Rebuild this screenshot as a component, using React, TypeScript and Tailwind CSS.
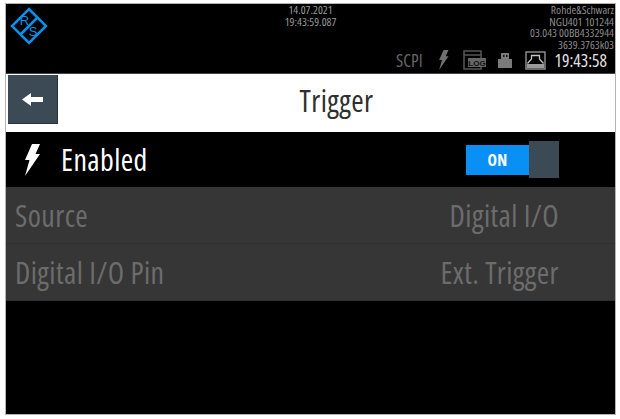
const condensed = "font-['Open_Sans',sans-serif] [font-stretch:75%]";

function Logo() {
  return (
    <svg width="38" height="38" viewBox="0 0 38 38" className="block">
      <path d="M19 2 L36 19 L19 36 L2 19 Z M28 10 L10 28" fill="none" stroke="#0c8fe8" strokeWidth="2.500" />
      <text x="14.500" y="18" fill="#0c8fe8" fontSize="13" textAnchor="middle" fontFamily="Liberation Sans">R</text>
      <text x="23" y="28.500" fill="#0c8fe8" fontSize="13" textAnchor="middle" fontFamily="Liberation Sans">S</text>
    </svg>
  );
}

function Bolt({ className, fill }: { className: string; fill: string }) {
  return (
    <svg viewBox="0 0 16 32" className={className}>
      <path d="M8 0 L16 0 L11.500 10 L16 10 L1 32 L5.500 16 L1 16 Z" fill={fill} />
    </svg>
  );
}

function LogIcon() {
  return (
    <svg width="23" height="20" viewBox="0 0 23 20" className="block">
      <path d="M1 1 H18 V19 H1 Z M1 5 H18" fill="none" stroke="#555" strokeWidth="1.500" />
      <rect x="5" y="8" width="18" height="9" fill="#666" />
      <text x="14" y="15.500" fontSize="8" fontWeight="700" fill="#111" textAnchor="middle" fontFamily="Liberation Sans">LOG</text>
    </svg>
  );
}

function UsbIcon() {
  return (
    <svg width="14" height="15" viewBox="0 0 14 15" className="block">
      <path d="M3 0 H11 V6 H14 V15 H0 V6 H3 Z" fill="#7a7a7a" />
      <rect x="5" y="2" width="1.500" height="2" fill="#111" />
      <rect x="8" y="2" width="1.500" height="2" fill="#111" />
    </svg>
  );
}

function LanIcon() {
  return (
    <svg width="21" height="19" viewBox="0 0 21 19" className="block">
      <path d="M1 1 H20 V18 H1 Z" fill="none" stroke="#8a8a8a" strokeWidth="1.500" />
      <path d="M2 12 L6.500 7 V4 H14.500 V7 L19 12 V14 H2 Z" fill="#000" />
      <path d="M2.500 12.500 L6.500 8 V4.500 H14.500 V8 L18.500 12.500" fill="none" stroke="#c4c4c4" strokeWidth="1.300" />
      <rect x="2" y="13" width="17" height="4" fill="#9a9a9a" />
    </svg>
  );
}

function Row({ label, value }: { label: string; value: string }) {
  return (
    <div className="flex h-[57px] items-center justify-between border-b border-[#283038] bg-[#363636] pl-[9px] pr-[56px] text-[30px] tracking-[0.4px] text-[#6c6c6c]">
      <span>{label}</span>
      <span>{value}</span>
    </div>
  );
}

export default function App() {
  return (
    <div className={`h-[419px] w-[620px] bg-white pb-[4px] pl-[5px] pr-[4px] pt-[3px] ${condensed}`}>
      <div className="flex h-full flex-col border border-[#b4b4b4] bg-black">
        <header className="grid h-[70px] shrink-0 grid-cols-[1fr_auto_1fr] border-b border-[#3b4650] bg-black">
          <div className="pl-[4px] pt-[3px]"><Logo /></div>
          <div className="text-center text-[11.500px] leading-[12px] text-[#9a9a9a]">
            <div>14.07.2021</div>
            <div>19:43:59.087</div>
          </div>
          <div className="flex flex-col items-end pr-[1px]">
            <div className="h-[46px] whitespace-nowrap text-right text-[11.500px] leading-[11.500px] text-[#8c8c8c]">
              <div>Rohde&amp;Schwarz</div>
              <div>NGU401 101244</div>
              <div>03.043 00BB4332944</div>
              <div>3639.3763k03</div>
            </div>
            <div className="flex h-[20px] items-center pr-[7px]">
              <span className="mr-[15px] text-[17.500px] leading-[20px] text-[#666]">SCPI</span>
              <Bolt className="mr-[14px] h-[20px] w-[11px]" fill="#6f6f6f" />
              <div className="mr-[12px]"><LogIcon /></div>
              <div className="mr-[13px]"><UsbIcon /></div>
              <div className="mr-[9px]"><LanIcon /></div>
              <span className="text-[17.500px] leading-[20px] text-[#e0e0e0]">19:43:58</span>
            </div>
          </div>
        </header>
        <div className="flex h-[58px] shrink-0 bg-white text-[#2f2f2f]">
          <button className="ml-[2px] mt-[1px] flex h-[49px] w-[50px] items-center justify-center border-b border-r border-[#2a3238] bg-[#3c4a55]">
            <svg width="21" height="13" viewBox="0 0 21 13"><path d="M0 6.500 L9 0 V4 H21 V9 H9 V13 Z" fill="#fff" /></svg>
          </button>
          <span className="flex-1 pt-[7px] text-center text-[30px] leading-[40px] tracking-[0.4px]">Trigger</span>
        </div>
        <div className="flex h-[55px] shrink-0 items-center justify-between bg-black pl-[18px] pr-[56px] text-[30px] tracking-[0.4px] text-white">
          <div className="flex items-center">
            <Bolt className="mr-[21px] h-[32px] w-[16px]" fill="#fff" />
            <span>Enabled</span>
          </div>
          <div className="flex items-center">
            <div className="flex h-[30px] w-[63px] items-center justify-center bg-[#0a8ff5] text-[16px] font-bold text-white">ON</div>
            <div className="h-[37px] w-[30px] bg-[#3c4a55]" />
          </div>
        </div>
        <Row label="Source" value="Digital I/O" />
        <Row label="Digital I/O Pin" value="Ext. Trigger" />
        <div className="flex-1 bg-black" />
      </div>
    </div>
  );
}
